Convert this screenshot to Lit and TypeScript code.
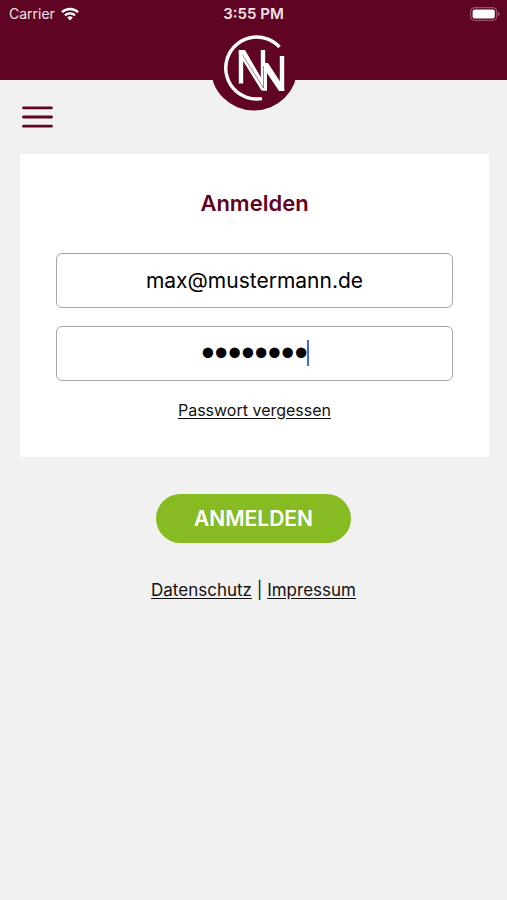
import { LitElement, html, css } from "lit";
import { customElement } from "lit/decorators.js";

@customElement("app-root")
export class AppRoot extends LitElement {
  static styles = css`
    :host {
      display: block;
      min-height: 100vh;
      background: #f1f1f1;
      color: #111;
      font-family: Inter, "Liberation Sans", sans-serif;
      font-size: 16px;
      line-height: 22px;
    }
    * {
      box-sizing: border-box;
    }
    .header {
      position: relative;
      height: 80px;
      background: #5f0422;
    }
    .status {
      display: grid;
      grid-template-columns: 1fr auto 1fr;
      align-items: center;
      height: 28px;
      padding: 0 7px;
      color: #f3e4e9;
      font-size: 14px;
    }
    .carrier {
      display: flex;
      align-items: center;
      gap: 6px;
      padding-left: 2px;
    }
    .time {
      font-size: 15px;
      font-weight: 600;
    }
    .battery {
      justify-self: end;
    }
    svg {
      display: block;
    }
    .logo {
      position: absolute;
      top: 23px;
      left: 50%;
      margin-left: -44px;
    }
    .menu {
      display: block;
      margin: 20px 0 20px 16px;
      padding: 6px;
      border: 0;
      background: none;
    }
    .card {
      display: flex;
      flex-direction: column;
      align-items: center;
      margin: 0 18px 37px 20px;
      padding: 36px;
      background: #fff;
    }
    h1 {
      margin: 0 0 36px;
      color: #5f0422;
      font-size: 22px;
      font-weight: 600;
      line-height: 27px;
    }
    .field {
      position: relative;
      width: 100%;
      margin-bottom: 18px;
    }
    .field input {
      display: block;
      width: 100%;
      height: 55px;
      padding: 0 12px;
      border: 1px solid #a6a6a6;
      border-radius: 6px;
      outline: 0;
      background: #fff;
      color: #000;
      font: 400 21px/28px Inter, "Liberation Sans", sans-serif;
      text-align: center;
      caret-color: #4169e1;
    }
    .field .secret {
      font: 400 38px/43px "Liberation Sans", sans-serif;
    }
    .caret {
      position: absolute;
      top: 14px;
      left: 50%;
      width: 2px;
      height: 26px;
      margin-left: 52px;
      background: #4169e1;
    }
    a {
      color: inherit;
      text-decoration: underline;
      text-underline-offset: 2px;
    }
    .submit {
      display: block;
      margin: 0 auto 36px;
      padding: 0 38px;
      height: 49px;
      border: 0;
      border-radius: 25px;
      background: #86bc22;
      color: #fff;
      font: 600 21px/28px Inter, "Liberation Sans", sans-serif;
    }
    .links {
      font-size: 17px;
      text-align: center;
    }
  `;

  render() {
    return html`
      <header class="header">
        <div class="status">
          <span class="carrier">
            Carrier
            <svg width="18" height="14" viewBox="0 0 18 14" fill="none" stroke="#fff" stroke-width="2.4" aria-hidden="true">
              <path d="M1 5.2a11.5 11.5 0 0 1 16 0M4 8.4a7.2 7.2 0 0 1 10 0" />
              <path d="M9 13.6l-2.8-3a4 4 0 0 1 5.6 0z" fill="#fff" stroke="none" />
            </svg>
          </span>
          <span class="time">3:55 PM</span>
          <svg class="battery" width="30" height="14" viewBox="0 0 30 14" aria-hidden="true">
            <rect x="0.7" y="0.7" width="26" height="12.6" rx="3.6" fill="none" stroke="#a9667b" />
            <rect x="2.6" y="2.6" width="22.2" height="8.8" rx="2" fill="#fff" />
            <path d="M28 4.8c2 .8 2 3.6 0 4.4z" fill="#a9667b" />
          </svg>
        </div>
        <svg class="logo" width="88" height="88" viewBox="210 23 88 88" role="img" aria-label="NN">
          <circle cx="254" cy="67" r="43.5" fill="#5f0422" />
          <path d="M279.5 47A31 31 0 1 0 262 98.6" fill="none" stroke="#fff" stroke-width="3.4" />
          <g fill="#fff">
            <path d="M238.800 50H243.200V83.500H238.800z" />
            <path d="M238.800 50H245L267 88V90.500H261.500L238.800 54z" />
            <path d="M260.800 50H265.200V82H260.800z" />
            <path d="M263 64H267V90.500H263z" />
            <path d="M263 63H268L284.200 88V91H279L263 67z" />
            <path d="M279.800 56H284.200V91H279.800z" />
          </g>
          <path d="M242.500 55L263.500 88V66" fill="none" stroke="#5f0422" stroke-width="0.5" />
        </svg>
      </header>
      <main>
        <button class="menu" type="button" aria-label="Menü">
          <svg width="31" height="22" viewBox="0 0 31 22" stroke="#5f0422" stroke-width="2.8" stroke-linecap="round" aria-hidden="true">
            <path d="M1.500 1.800H29.500M1.500 11H29.500M1.500 20.200H29.500" />
          </svg>
        </button>
        <form @submit=${(e: Event) => e.preventDefault()}>
          <section class="card">
            <h1>Anmelden</h1>
            <div class="field">
              <input type="email" aria-label="E-Mail" value="max@mustermann.de" />
            </div>
            <div class="field">
              <input class="secret" type="password" aria-label="Passwort" value="password" />
              <span class="caret"></span>
            </div>
            <a href="#passwort">Passwort vergessen</a>
          </section>
          <button class="submit" type="submit">ANMELDEN</button>
        </form>
        <nav class="links">
          <a href="#datenschutz">Datenschutz</a> | <a href="#impressum">Impressum</a>
        </nav>
      </main>
    `;
  }
}
